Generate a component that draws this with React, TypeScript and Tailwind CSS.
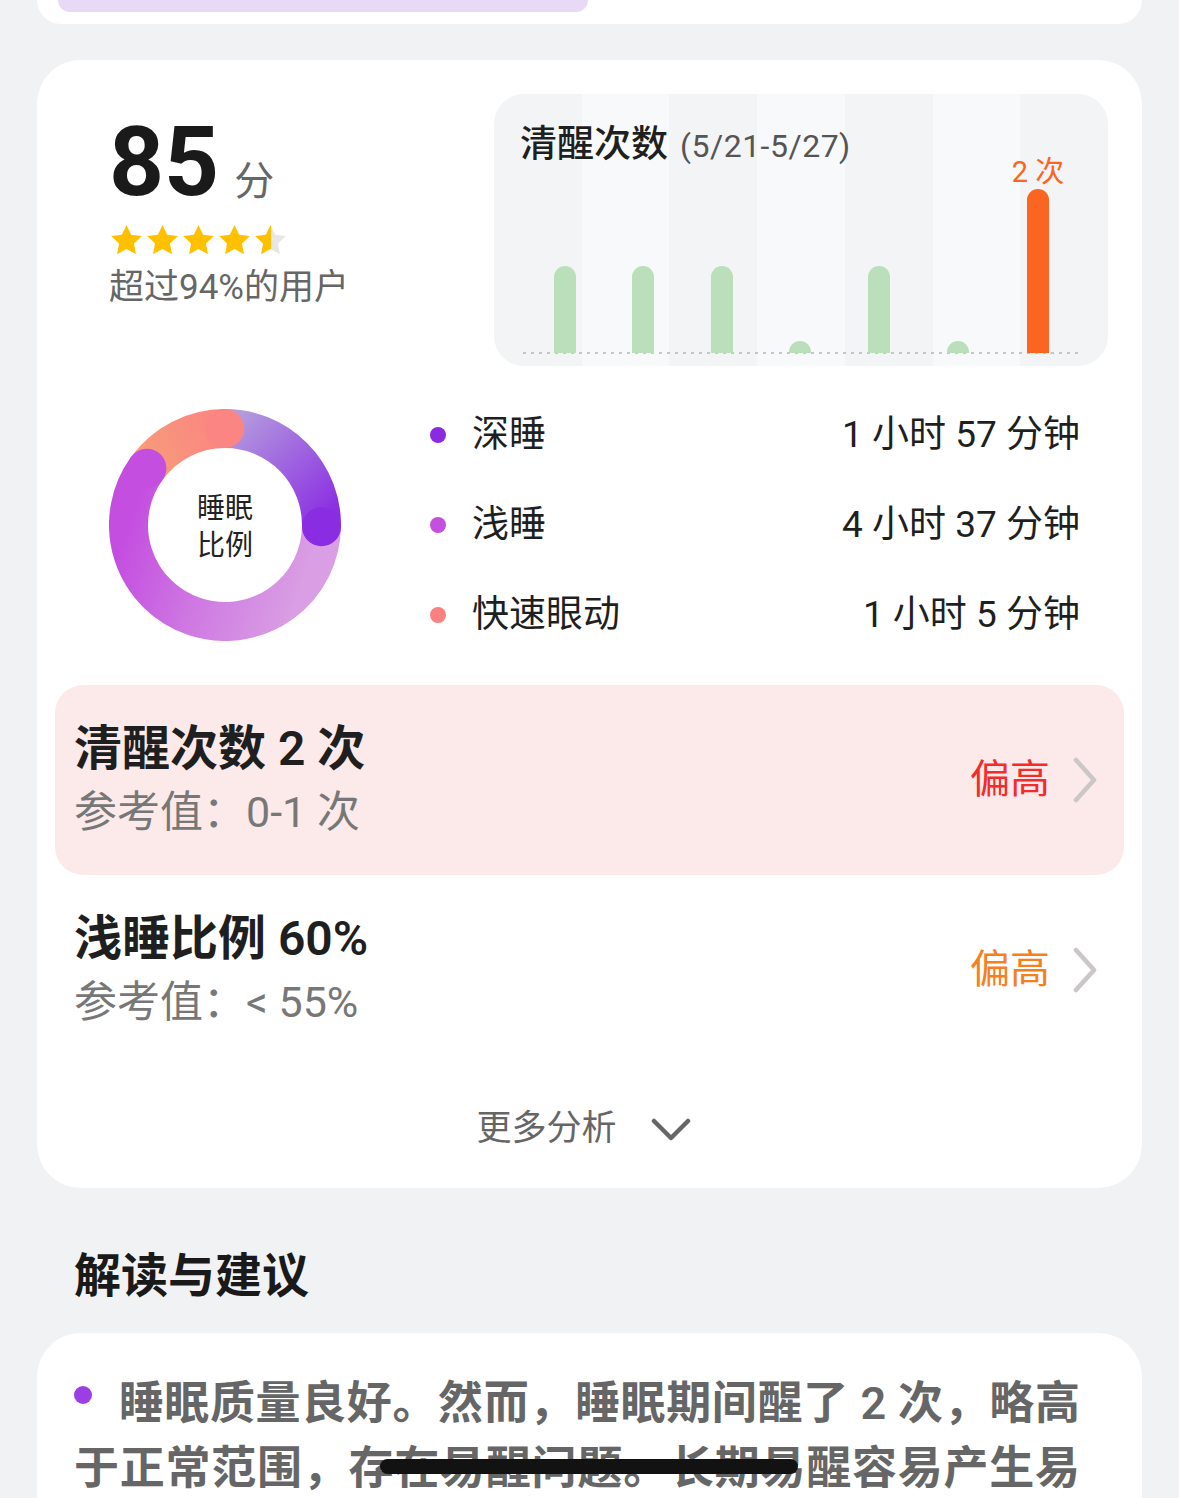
import React from "react";

const BARS = [1, 1, 1, 0, 1, 0, 2];
const BAR_X = [71, 149, 228, 306, 385, 464, 544];

const LEGEND = [
  { color: "bg-[#8a2be2]", label: "深睡", value: "1 小时 57 分钟" },
  { color: "bg-[#c44fe0]", label: "浅睡", value: "4 小时 37 分钟" },
  { color: "bg-[#fb8080]", label: "快速眼动", value: "1 小时 5 分钟" },
];

function Star({ half }: { half?: boolean }) {
  return (
    <svg width="35" height="34" viewBox="0 0 24 23">
      <defs>
        <linearGradient id="halfStar" x1="0" x2="1" y1="0" y2="0">
          <stop offset="50%" stopColor="#ffc000" />
          <stop offset="50%" stopColor="#e6e6e6" />
        </linearGradient>
      </defs>
      <path
        d="M12 1.2l3.2 6.7 7.3.9-5.4 5.1 1.4 7.3L12 17.6l-6.5 3.6 1.4-7.3-5.4-5.1 7.3-.9z"
        fill={half ? "url(#halfStar)" : "#ffc000"}
      />
    </svg>
  );
}

function WakeChart() {
  return (
    <div className="relative h-[272px] w-[614px] overflow-hidden rounded-[30px]">
      <div className="absolute inset-0 flex">
        {BARS.map((_, i) => (
          <div key={i} className={i % 2 === 0 ? "flex-1 bg-[#f3f4f6]" : "flex-1 bg-[#f8f9fa]"} />
        ))}
      </div>
      <div className="relative pl-[26px] pt-[29px] leading-[44px]">
        <span className="text-[37px] font-medium text-[#1f1f1f]">清醒次数</span>
        <span className="ml-[12px] text-[32px] tracking-[0.5px] text-[#555]">(5/21-5/27)</span>
      </div>
      <svg className="absolute inset-0" width="614" height="272" viewBox="0 0 614 272">
        <line x1="29" y1="259" x2="586" y2="259" stroke="#b5b5b5" strokeWidth="1.5" strokeDasharray="3 5" />
        {BARS.map((v, i) => {
          const h = v === 2 ? 164 : v === 1 ? 87 : 12;
          const x = BAR_X[i];
          const top = 259 - h;
          return (
            <path
              key={i}
              d={`M ${x - 11} 259 V ${top + 11} A 11 11 0 0 1 ${x + 11} ${top + 11} V 259 Z`}
              fill={v === 2 ? "#fb6522" : "#bbdfbb"}
            />
          );
        })}
        <text
          x="544"
          y="88"
          textAnchor="middle"
          fontSize="29"
          fill="#fb6522"
          fontFamily="Roboto, 'Noto Sans CJK SC', sans-serif"
        >
          2 次
        </text>
      </svg>
    </div>
  );
}

function Donut() {
  const cx = 116;
  const cy = 116;
  const r = 96.5;
  const sw = 39;
  const pt = (deg: number) => {
    const a = ((deg - 90) * Math.PI) / 180;
    return [cx + r * Math.cos(a), cy + r * Math.sin(a)];
  };
  const arc = (s: number, e: number) => {
    const [x1, y1] = pt(s);
    const [x2, y2] = pt(e);
    return `M ${x1} ${y1} A ${r} ${r} 0 ${e - s > 180 ? 1 : 0} 1 ${x2} ${y2}`;
  };
  const segs = [
    { s: 0, e: 91, grad: "url(#gDeep)", end: "#8a2de2" },
    { s: 91, e: 306, grad: "url(#gLight)", end: "#c44ee0" },
    { s: 306, e: 359.9, grad: "url(#gRem)", end: "#fb8582" },
  ];
  const [d0x, d0y] = pt(0);
  const [d1x, d1y] = pt(91);
  const [l1x, l1y] = pt(306);

  return (
    <div className="relative h-[232px] w-[232px] shrink-0">
      <svg className="absolute inset-0" width="232" height="232" viewBox="0 0 232 232">
        <defs>
          <linearGradient id="gDeep" gradientUnits="userSpaceOnUse" x1={d0x} y1={d0y} x2={d1x} y2={d1y}>
            <stop offset="0" stopColor="#b49bde" />
            <stop offset="1" stopColor="#8a2de2" />
          </linearGradient>
          <linearGradient id="gLight" gradientUnits="userSpaceOnUse" x1={d1x} y1={d1y} x2={l1x} y2={l1y}>
            <stop offset="0" stopColor="#d99ee3" />
            <stop offset="0.5" stopColor="#cf7ae2" />
            <stop offset="1" stopColor="#c44ee0" />
          </linearGradient>
          <linearGradient id="gRem" gradientUnits="userSpaceOnUse" x1={l1x} y1={l1y} x2={d0x} y2={d0y}>
            <stop offset="0" stopColor="#f79b7a" />
            <stop offset="1" stopColor="#fb8582" />
          </linearGradient>
        </defs>
        {segs.map((g, i) => (
          <path key={i} d={arc(g.s, g.e)} fill="none" stroke={g.grad} strokeWidth={sw} />
        ))}
        {segs.map((g, i) => {
          const [x, y] = pt(g.e);
          return <circle key={i} cx={x} cy={y} r={sw / 2} fill={g.end} />;
        })}
      </svg>
      <div className="absolute inset-0 flex flex-col items-center justify-center pt-[4px] text-[28px] leading-[37px] text-[#222]">
        <span>睡眠</span>
        <span>比例</span>
      </div>
    </div>
  );
}

function ChevronRight() {
  return (
    <svg width="26" height="46" viewBox="0 0 26 46" className="ml-[22px]">
      <path d="M4 3 L22 23 L4 43" fill="none" stroke="#cbc7c7" strokeWidth="4.5" strokeLinecap="round" strokeLinejoin="round" />
    </svg>
  );
}

function MetricRow({ title, refText, tone, highlight }: { title: string; refText: string; tone: string; highlight?: boolean }) {
  return (
    <div
      className={
        highlight
          ? "mx-[18px] flex h-[190px] items-center justify-between rounded-[28px] bg-[#fbeae9] pl-[19px] pr-[26px]"
          : "mx-[18px] flex h-[190px] items-center justify-between pl-[19px] pr-[26px]"
      }
    >
      <div>
        <p className="text-[48px] font-semibold leading-[60px] text-[#1f1f1f]">{title}</p>
        <p className="mt-[3px] text-[43px] leading-[60px] text-[#777]">{refText}</p>
      </div>
      <div className="flex items-center">
        <span className={`text-[40px] ${tone}`}>偏高</span>
        <ChevronRight />
      </div>
    </div>
  );
}

export default function App() {
  return (
    <div className="relative h-[1498px] overflow-hidden bg-[#f1f2f4] font-['Roboto','Noto_Sans_CJK_SC',sans-serif]">
      <div className="mx-[37px] h-6 rounded-b-[44px] bg-white">
        <div className="ml-[21px] h-3 w-[530px] rounded-b-[40px] bg-[#e8d9f6]" />
      </div>

      <div className="mx-[37px] mt-9 rounded-[44px] bg-white pt-[34px]">
        <div className="flex">
          <div className="w-[457px] pl-[72px] pt-[20px]">
            <div className="flex items-baseline">
              <span className="text-[96px] font-bold leading-none text-[#1a1a1a]">85</span>
              <span className="ml-[15px] text-[40px] text-[#666]">分</span>
            </div>
            <div className="mt-[11px] flex gap-[1px]">
              <Star />
              <Star />
              <Star />
              <Star />
              <Star half />
            </div>
            <p className="mt-[11px] text-[35px] leading-[40px] text-[#666]">超过94%的用户</p>
          </div>
          <WakeChart />
        </div>

        <div className="mt-[24px] flex items-center pl-[72px] pr-[62px]">
          <Donut />
          <div className="ml-[89px] flex-1">
            {LEGEND.map((row) => (
              <div key={row.label} className="flex h-[90px] items-center">
                <span className={`h-4 w-4 rounded-full ${row.color}`} />
                <span className="ml-[26px] flex-1 text-[37px] text-[#1f1f1f]">{row.label}</span>
                <span className="text-[37px] text-[#1f1f1f]">{row.value}</span>
              </div>
            ))}
          </div>
        </div>

        <div className="mt-[25px]">
          <MetricRow title="清醒次数 2 次" refText="参考值：0-1 次" tone="text-[#f52a2a]" highlight />
          <MetricRow title="浅睡比例 60%" refText="参考值：< 55%" tone="text-[#f5801f]" />
        </div>

        <div className="flex h-[123px] items-center justify-center pr-[12px] pt-[6px]">
          <span className="text-[35px] text-[#666]">更多分析</span>
          <svg width="40" height="26" viewBox="0 0 40 26" className="ml-[34px]">
            <path d="M3 4 L20 21 L37 4" fill="none" stroke="#666" strokeWidth="4.5" strokeLinecap="round" strokeLinejoin="round" />
          </svg>
        </div>
      </div>

      <h2 className="ml-[74px] mt-[58px] text-[47px] font-bold leading-[60px] text-[#1a1a1a]">解读与建议</h2>

      <div className="mx-[37px] mt-[27px] rounded-[44px] bg-white pb-[40px] pl-[37px] pr-[62px] pt-[38px]">
        <p className="text-justify text-[45px] font-semibold leading-[65px] text-[#666]">
          <span className="mb-[24px] mr-[26px] inline-block h-[18px] w-[18px] rounded-full bg-[#9b3ee6] align-middle" />
          睡眠质量良好。然而，睡眠期间醒了 2 次，略高于正常范围，存在易醒问题。长期易醒容易产生易疲劳。
        </p>
      </div>

      <div className="fixed bottom-[24px] left-[380px] h-[15px] w-[418px] rounded-full bg-[#121212]" />
    </div>
  );
}
